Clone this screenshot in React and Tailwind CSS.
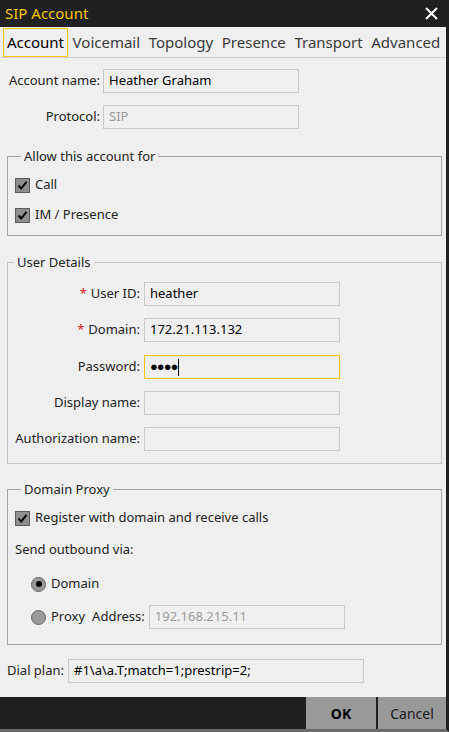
import React from 'react';

const font = { fontFamily: '"Noto Sans", "Open Sans", sans-serif' };

const tabs = ['Account', 'Voicemail', 'Topology', 'Presence', 'Transport', 'Advanced'];

const CheckBox = () => (
  <span className="w-[15px] h-[15px] bg-[#8f8f8f] border border-[#5a5a5a] flex items-center justify-center shrink-0">
    <svg width="11" height="11" viewBox="0 0 11 11">
      <path d="M1.5 5.5 L4.2 8.5 L9.5 1.8" fill="none" stroke="#000" strokeWidth="2" />
    </svg>
  </span>
);

const Radio = ({ checked }) => (
  <span className="w-[15px] h-[15px] rounded-full bg-[#999999] border border-[#666666] flex items-center justify-center shrink-0">
    {checked && <span className="w-[6px] h-[6px] rounded-full bg-black" />}
  </span>
);

const Field = ({ children, className = '', disabled }) => (
  <div
    className={`h-[24px] border border-[#c9c9c9] bg-[#efefef] flex items-center px-[5px] text-[13px] ${disabled ? 'text-[#9a9a9a]' : 'text-black'} ${className}`}
  >
    {children}
  </div>
);

const DetailRow = ({ label, required, children, className = '' }) => (
  <div className={`flex items-center ${className}`}>
    <div className="w-[132px] text-right text-[13px] text-[#222]">
      {required && <span className="text-[#e02020] mr-[4px]">*</span>}
      {label}
    </div>
    <div className="ml-[4px]">{children}</div>
  </div>
);

const App = () => {
  return (
    <div style={font} className="w-[449px] h-[732px] flex flex-col bg-[#efefef] border-r-[3px] border-b-[3px] border-r-[#202020] border-b-[#6b6b6b] overflow-hidden">
      {/* title bar */}
      <div className="h-[27px] bg-[#202020] flex items-center justify-between pl-[5px] pr-[8px] shrink-0">
        <span className="text-[15px] text-[#f7c600] leading-none">SIP Account</span>
        <svg width="13" height="13" viewBox="0 0 13 13">
          <path d="M1 1 L12 12 M12 1 L1 12" stroke="#fff" strokeWidth="2" />
        </svg>
      </div>

      {/* tabs */}
      <div className="h-[31px] flex items-stretch gap-[0.6px] pl-[3px] pt-[1px] border-b border-[#cfcfcf] shrink-0">
        {tabs.map((t, i) => (
          <div
            key={t}
            className={`px-[3px] flex items-center text-[15px] ${i === 0 ? 'border border-[#f7c600] text-black' : 'border border-transparent text-[#3a3a3a]'}`}
          >
            {t}
          </div>
        ))}
      </div>

      {/* content */}
      <div className="flex-1 flex flex-col">
        <div className="flex items-center mt-[11px]">
          <div className="w-[100px] text-right text-[13px] text-[#222]">Account name:</div>
          <Field className="ml-[3px] w-[196px]">Heather Graham</Field>
        </div>
        <div className="flex items-center mt-[12px]">
          <div className="w-[100px] text-right text-[13px] text-[#222]">Protocol:</div>
          <Field className="ml-[3px] w-[196px]" disabled>SIP</Field>
        </div>

        <fieldset className="ml-[7px] w-[435px] mt-[18px] border border-[#a3a3a3] pl-[7px] pb-[10px]">
          <legend className="ml-[6px] px-[3px] text-[13px] leading-[18px] text-[#222]">Allow this account for</legend>
          <div className="flex items-center gap-[5px] h-[20px] mt-[10px] text-[13px] text-[#222]">
            <CheckBox />
            <span>Call</span>
          </div>
          <div className="flex items-center gap-[5px] h-[20px] mt-[10px] text-[13px] text-[#222]">
            <CheckBox />
            <span>IM / Presence</span>
          </div>
        </fieldset>

        <fieldset className="ml-[7px] w-[435px] mt-[17px] border border-[#c4c4c4] pb-[12px]">
          <legend className="ml-[6px] px-[3px] text-[13px] leading-[18px] text-[#222]">User Details</legend>
          <DetailRow label="User ID:" required className="mt-[11px]">
            <Field className="w-[196px]">heather</Field>
          </DetailRow>
          <DetailRow label="Domain:" required className="mt-[12px]">
            <Field className="w-[196px]">172.21.113.132</Field>
          </DetailRow>
          <DetailRow label="Password:" className="mt-[13px]">
            <Field className="w-[196px] !border-[#f2c200]">
              <span className="text-[13px] tracking-[-1px]">●●●●</span>
              <span className="w-px h-[17px] bg-black ml-[1px]" />
            </Field>
          </DetailRow>
          <DetailRow label="Display name:" className="mt-[12px]">
            <Field className="w-[196px]" />
          </DetailRow>
          <DetailRow label="Authorization name:" className="mt-[12px]">
            <Field className="w-[196px]" />
          </DetailRow>
        </fieldset>

        <fieldset className="ml-[7px] w-[435px] mt-[16px] border border-[#a3a3a3] pl-[7px] pb-[15px]">
          <legend className="ml-[6px] px-[3px] text-[13px] leading-[18px] text-[#222]">Domain Proxy</legend>
          <div className="flex items-center gap-[5px] h-[20px] mt-[10px] text-[13px] text-[#222]">
            <CheckBox />
            <span>Register with domain and receive calls</span>
          </div>
          <div className="h-[20px] mt-[12px] flex items-center text-[13px] text-[#222]">Send outbound via:</div>
          <div className="flex items-center gap-[5px] h-[20px] mt-[14px] pl-[16px] text-[13px] text-[#222]">
            <Radio checked />
            <span>Domain</span>
          </div>
          <div className="flex items-center h-[24px] mt-[11px] pl-[16px] text-[13px] text-[#222]">
            <Radio />
            <span className="ml-[5px]">Proxy</span>
            <span className="ml-[7px]">Address:</span>
            <Field className="ml-[4px] w-[196px]" disabled>192.168.215.11</Field>
          </div>
        </fieldset>

        <div className="flex items-center mt-[14px] pl-[7px]">
          <span className="text-[13px] text-[#222]">Dial plan:</span>
          <Field className="ml-[4px] w-[296px]">#1\a\a.T;match=1;prestrip=2;</Field>
        </div>
      </div>

      {/* footer */}
      <div className="h-[32px] bg-[#202020] flex justify-end gap-[2px] shrink-0">
        <button className="w-[70px] bg-[#999999] text-[14px] font-bold text-black">OK</button>
        <button className="w-[68px] bg-[#999999] text-[14px] text-[#1a1a1a]">Cancel</button>
      </div>
    </div>
  );
};

export default App;
